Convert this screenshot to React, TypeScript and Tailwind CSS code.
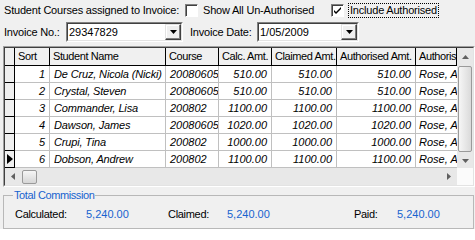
import React from "react";

interface Row {
  sort: number;
  name: string;
  course: string;
  calc: string;
  claimed: string;
  authorised: string;
  by: string;
}

const rows: Row[] = [
  { sort: 1, name: "De Cruz, Nicola (Nicki)", course: "20080605", calc: "510.00", claimed: "510.00", authorised: "510.00", by: "Rose, Anne" },
  { sort: 2, name: "Crystal, Steven", course: "20080605", calc: "510.00", claimed: "510.00", authorised: "510.00", by: "Rose, Anne" },
  { sort: 3, name: "Commander, Lisa", course: "200802", calc: "1100.00", claimed: "1100.00", authorised: "1100.00", by: "Rose, Anne" },
  { sort: 4, name: "Dawson, James", course: "20080605", calc: "1020.00", claimed: "1020.00", authorised: "1020.00", by: "Rose, Anne" },
  { sort: 5, name: "Crupi, Tina", course: "200802", calc: "1000.00", claimed: "1000.00", authorised: "1000.00", by: "Rose, Anne" },
  { sort: 6, name: "Dobson, Andrew", course: "200802", calc: "1100.00", claimed: "1100.00", authorised: "1100.00", by: "Rose, Anne" },
];

const cols = "grid grid-cols-[10px_35px_116px_53px_53px_65px_79px_41px]";

function CheckBox({ checked }: { checked?: boolean }) {
  return (
    <span className="flex h-[13px] w-[13px] shrink-0 items-center justify-center border border-t-[#808080] border-l-[#808080] border-r-white border-b-white bg-white shadow-[inset_1px_1px_0_#404040]">
      {checked && (
        <svg width="9" height="9" viewBox="0 0 9 9">
          <path d="M1 4 L3 6 L8 1 L8 3 L3 8 L1 6 Z" fill="#000" />
        </svg>
      )}
    </span>
  );
}

function Combo({ value, width }: { value: string; width: string }) {
  return (
    <div className={`flex h-[20px] ${width} items-stretch border border-t-[#808080] border-l-[#808080] border-r-white border-b-white`}>
      <div className="flex flex-1 items-stretch border border-t-[#404040] border-l-[#404040] border-r-[#e3e3e3] border-b-[#e3e3e3] bg-white">
        <span className="flex-1 pl-[1px] leading-[16px]">{value}</span>
        <span className="flex w-[16px] items-center justify-center border border-t-[#e3e3e3] border-l-[#e3e3e3] border-r-[#404040] border-b-[#404040] bg-[#f0f0f0] shadow-[inset_-1px_-1px_0_#808080,inset_1px_1px_0_#fff]">
          <svg width="7" height="4" viewBox="0 0 7 4">
            <path d="M0 0 H7 L3.5 4 Z" fill="#000" />
          </svg>
        </span>
      </div>
    </div>
  );
}

function Arrow({ dir }: { dir: "up" | "down" | "left" | "right" }) {
  const d = {
    up: "M0 4 L3.5 0 L7 4 Z",
    down: "M0 0 H7 L3.5 4 Z",
    left: "M4 0 V7 L0 3.5 Z",
    right: "M0 0 V7 L4 3.5 Z",
  }[dir];
  const vert = dir === "up" || dir === "down";
  return (
    <svg width={vert ? 7 : 4} height={vert ? 4 : 7} viewBox={vert ? "0 0 7 4" : "0 0 4 7"}>
      <path d={d} fill="#606060" />
    </svg>
  );
}

const cell = "overflow-hidden whitespace-nowrap border-r border-b border-[#c0c0c0] leading-[16px]";

export default function App() {
  return (
    <div className="h-[229px] w-[475px] overflow-hidden bg-[#f0f0f0] text-[11px] leading-[13px] text-black [font-family:'Liberation_Sans',Arial,sans-serif]">
      {/* top options */}
      <div className="flex h-[20px] items-center pl-[4px] tracking-[-0.2px]">
        <span className="w-[181px] whitespace-nowrap">Student Courses assigned to Invoice:</span>
        <CheckBox />
        <span className="ml-[5px] w-[128px] whitespace-nowrap">Show All Un-Authorised</span>
        <CheckBox checked />
        <span className="ml-[4px] whitespace-nowrap border border-dotted border-black px-[1px] leading-[13px]">Include Authorised</span>
      </div>

      {/* invoice row */}
      <div className="mt-[2px] flex h-[20px] items-center pl-[4px]">
        <span className="w-[62px] whitespace-nowrap tracking-[-0.2px]">Invoice No.:</span>
        <Combo value="29347829" width="w-[117px]" />
        <span className="ml-[7px] w-[67px] whitespace-nowrap tracking-[-0.2px]">Invoice Date:</span>
        <Combo value="1/05/2009" width="w-[102px]" />
      </div>

      {/* grid */}
      <div className="mt-[4px] ml-[3px] h-[141px] w-[472px] border border-t-[#a0a0a0] border-l-[#a0a0a0] border-r-white border-b-white">
        <div className="flex h-full flex-col border border-t-[#404040] border-l-[#404040] border-r-[#e3e3e3] border-b-[#e3e3e3] bg-white">
          <div className="flex">
            <div className="w-[452px] overflow-hidden">
              <div className={`${cols} h-[18px] bg-[#f0f0f0] tracking-[-0.4px]`}>
                {["", "Sort", "Student Name", "Course", "Calc. Amt.", "Claimed Amt.", "Authorised Amt.", "Authoris"].map((h, i) => (
                  <div
                    key={i}
                    className="overflow-hidden whitespace-nowrap border-r border-b border-black pl-[3px] leading-[17px]"
                  >
                    {h}
                  </div>
                ))}
              </div>
              {rows.map((r) => (
                <div key={r.sort} className={`${cols} h-[17px] italic`}>
                  <div className="flex items-center border-r border-b border-black bg-[#f0f0f0] pl-[2px]">
                    {r.sort === 6 && (
                      <svg width="6" height="10" viewBox="0 0 6 10">
                        <path d="M0 0 L6 5 L0 10 Z" fill="#000" />
                      </svg>
                    )}
                  </div>
                  <div className={`${cell} pr-[4px] text-right`}>{r.sort}</div>
                  <div className={`${cell} pl-[4px] tracking-[-0.15px]`}>{r.name}</div>
                  <div className={`${cell} pl-[4px]`}>{r.course}</div>
                  <div className={`${cell} pr-[4px] text-right`}>{r.calc}</div>
                  <div className={`${cell} pr-[4px] text-right`}>{r.claimed}</div>
                  <div className={`${cell} pr-[4px] text-right`}>{r.authorised}</div>
                  <div className="overflow-hidden whitespace-nowrap border-b border-[#c0c0c0] pl-[3px] leading-[16px]">{r.by}</div>
                </div>
              ))}
            </div>
            {/* vertical scrollbar */}
            <div className="flex h-[120px] w-[16px] flex-col bg-[#e8e8e8]">
              <div className="flex h-[17px] items-center justify-center">
                <Arrow dir="up" />
              </div>
              <div className="flex-1 px-[1px]">
                <div className="mt-[1px] h-[86px] rounded-[2px] border border-[#9a9a9a] bg-gradient-to-r from-[#f6f6f6] to-[#dadada]" />
              </div>
              <div className="flex h-[15px] items-center justify-center">
                <Arrow dir="down" />
              </div>
            </div>
          </div>
          {/* horizontal scrollbar */}
          <div className="flex h-[17px]">
            <div className="flex w-[452px] items-center bg-[#e8e8e8]">
              <div className="flex w-[16px] items-center justify-center">
                <Arrow dir="left" />
              </div>
              <div className="ml-[1px] h-[14px] w-[15px] rounded-[2px] border border-[#9a9a9a] bg-gradient-to-b from-[#f6f6f6] to-[#d6d6d6]" />
              <div className="flex-1" />
              <div className="flex w-[17px] items-center justify-center">
                <Arrow dir="right" />
              </div>
            </div>
            <div className="w-[16px] bg-[#fbfbfb]" />
          </div>
        </div>
      </div>

      {/* totals */}
      <fieldset className="mt-[2px] ml-[3px] h-[40px] w-[471px] border border-[#b8b8b8]">
        <legend className="ml-[9px] px-[1px] text-[11px] leading-[13px] tracking-[-0.4px] text-[#1763cf]">Total Commission</legend>
        <div className="mt-[5px] flex items-center pl-[11px] text-[11px] leading-[14px]">
          <span className="w-[71px] tracking-[-0.3px]">Calculated:</span>
          <span className="w-[82px] text-[#1763cf]">5,240.00</span>
          <span className="w-[59px] tracking-[-0.3px]">Claimed:</span>
          <span className="w-[127px] text-[#1763cf]">5,240.00</span>
          <span className="w-[43px] tracking-[-0.3px]">Paid:</span>
          <span className="text-[#1763cf]">5,240.00</span>
        </div>
      </fieldset>
    </div>
  );
}
